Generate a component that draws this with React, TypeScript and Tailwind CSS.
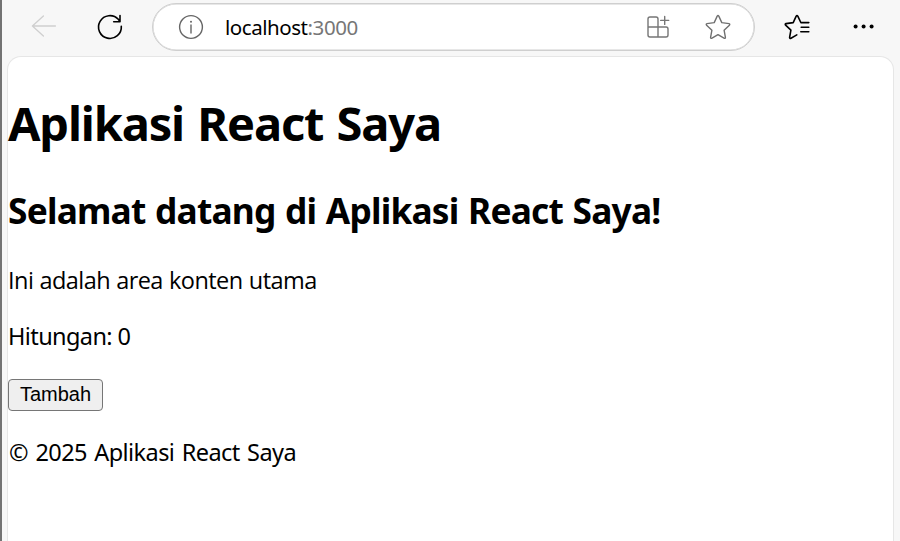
import { useState } from "react";

function BackIcon() {
  return (
    <svg className="block size-7" viewBox="0 0 28 28" fill="none" stroke="#cfcfcf" strokeWidth="1.3" strokeLinecap="round" strokeLinejoin="round">
      <path d="M25.4 13H2.4M13.4 3L2.4 13l11 10" />
    </svg>
  );
}

function ReloadIcon() {
  return (
    <svg className="block size-7" viewBox="0 0 28 28" fill="none" stroke="#000" strokeWidth="1.6" strokeLinecap="round" strokeLinejoin="round">
      <path d="M25.3 13.2A11.4 11.4 0 1 1 22.3 6.3L23.9 8.5M24 2.6v6.1h-6.3" />
    </svg>
  );
}

function InfoIcon() {
  return (
    <svg className="block size-7" viewBox="0 0 28 28" fill="none" stroke="#666" strokeWidth="1.4">
      <circle cx="14" cy="14" r="11.4" />
      <path d="M14 12v8" strokeLinecap="round" />
      <circle cx="14" cy="8.7" r="1" fill="#666" stroke="none" />
    </svg>
  );
}

function AppsIcon() {
  return (
    <svg className="block size-7" viewBox="0 0 28 28" fill="none" stroke="#767676" strokeWidth="1.4" strokeLinecap="round" strokeLinejoin="round">
      <path d="M14 14V6a2 2 0 0 0-2-2H6a2 2 0 0 0-2 2v16a2 2 0 0 0 2 2h16a2 2 0 0 0 2-2v-6a2 2 0 0 0-2-2H4M14 14v10M20.7 3.4v8M16.7 7.4h8" />
    </svg>
  );
}

function StarIcon() {
  return (
    <svg className="block size-7" viewBox="0 0 28 28" fill="none" stroke="#707070" strokeWidth="1.4" strokeLinejoin="round">
      <path d="M13.2 3.1q.8-1.2 1.6 0l3 6.5 7.2 1q1.3.5.4 1.6l-5.3 5 1.3 7.2q-.1 1.4-1.4.8L14 21.7l-6 3.5q-1.4.5-1.4-.8l1.3-7.2-5.3-5q-.9-1.1.4-1.6l7.2-1z" />
    </svg>
  );
}

function FavoritesIcon() {
  return (
    <svg className="block size-7" viewBox="0 0 28 28" fill="none" stroke="#000" strokeWidth="1.6" strokeLinecap="round" strokeLinejoin="round">
      <path d="M17.8 9.5l-3-6.4q-.8-1.2-1.6 0l-3 6.5-7.2 1q-1.3.5-.4 1.6l5.3 5-1.3 7.2q.1 1.4 1.4.8l5.8-3.3M17.8 9.6h8M18.2 14.2h7.6M17.8 18.8h8" />
    </svg>
  );
}

function MoreIcon() {
  return (
    <svg className="block size-7" viewBox="0 0 28 28" fill="#000">
      <circle cx="5.6" cy="13.6" r="2" />
      <circle cx="13.6" cy="13.6" r="2" />
      <circle cx="21.6" cy="13.6" r="2" />
    </svg>
  );
}

function Toolbar() {
  return (
    <header className="flex h-[53px] items-start pt-[3px] pl-[28px]">
      <div className="flex h-12 items-center gap-[38px]">
        <BackIcon />
        <ReloadIcon />
      </div>
      <div className="ml-[28px] flex h-12 w-[603px] items-center rounded-full border border-[#cfcfcf] bg-white pl-[24px] pr-[22px] shadow-[inset_0_0_0_0.5px_#cfcfcf]">
        <InfoIcon />
        <span className="ml-[20px] whitespace-nowrap font-['Noto_Sans',sans-serif] text-[20.5px] leading-[28px] tracking-[-0.45px] text-black">
          localhost<span className="text-[#767676]">:3000</span>
        </span>
        <div className="ml-auto flex gap-[32px]">
          <AppsIcon />
          <StarIcon />
        </div>
      </div>
      <div className="ml-[28px] flex h-12 items-center gap-[39px]">
        <FavoritesIcon />
        <MoreIcon />
      </div>
    </header>
  );
}

export default function App() {
  const [count, setCount] = useState(0);
  return (
    <div className="flex h-[541px] w-[900px] overflow-hidden bg-[#f7f7f7] font-['Noto_Sans',sans-serif] text-black">
      <div className="w-[2px] shrink-0 bg-[#737373]" />
      <div className="flex w-[898px] flex-col">
        <div className="-ml-[2px] h-[56px] shrink-0 pl-[2px]">
          <Toolbar />
        </div>
        <main className="ml-[5px] w-[887px] grow rounded-t-[14px] border border-b-0 border-[#e6e6e6] bg-white pt-[34px] whitespace-nowrap">
          <h1 className="text-[47px] leading-[64px] font-bold tracking-[-1.15px] [word-spacing:2.2px]">Aplikasi React Saya</h1>
          <h2 className="mt-[31px] text-[35.3px] leading-[48px] font-bold tracking-[-0.8px] [word-spacing:1.2px]">Selamat datang di Aplikasi React Saya!</h2>
          <p className="mt-[30px] font-['Open_Sans',sans-serif] text-[23.5px] leading-[32px] tracking-[-0.55px] [word-spacing:0.6px]">Ini adalah area konten utama</p>
          <p className="mt-[24px] text-[23.5px] leading-[32px] tracking-[-0.6px]">Hitungan: {count}</p>
          <button
            onClick={() => setCount(count + 1)}
            className="mt-[27px] flex h-[32px] w-[95px] items-center justify-center rounded-[4px] border border-[#767676] bg-[#efefef] pb-[2px] font-['Liberation_Sans',Arial,sans-serif] text-[20px] leading-[24px]"
          >
            Tambah
          </button>
          <p className="mt-[25px] pl-px text-[23.5px] leading-[32px] tracking-[-0.58px] [word-spacing:1.9px]">© 2025 Aplikasi React Saya</p>
        </main>
      </div>
    </div>
  );
}
